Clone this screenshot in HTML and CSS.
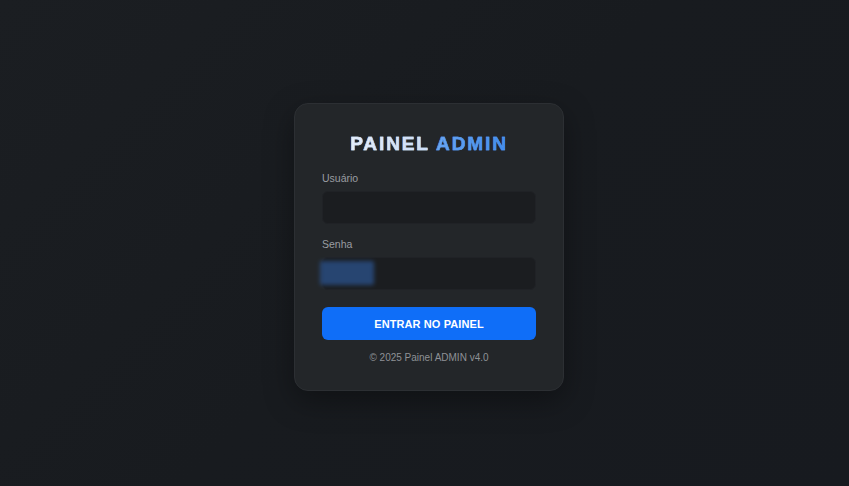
FILE: index.html
```html
<!DOCTYPE html>
<html lang="pt-BR">
<head>
<meta charset="utf-8">
<title>Painel ADMIN</title>
<link rel="stylesheet" href="styles.css">
</head>
<body>
<main class="page">
  <form class="card">
    <h1 class="title"><span class="t1">PAINEL</span> <span class="t2">ADMIN</span></h1>
    <label class="label" for="u">Usuário</label>
    <div class="field"><input id="u" class="input" type="text"></div>
    <label class="label" for="p">Senha</label>
    <div class="field"><input id="p" class="input" type="password"><span class="autofill"></span></div>
    <button class="btn" type="button">ENTRAR NO PAINEL</button>
    <p class="foot">© 2025 Painel ADMIN v4.0</p>
  </form>
</main>
</body>
</html>
```

FILE: styles.css
```css
* { box-sizing: border-box; }
html, body { margin: 0; height: 100%; }
body {
  background: linear-gradient(135deg, #1b1e22 0%, #181b1f 50%, #171a1f 100%);
  font-family: "Liberation Sans", Arial, sans-serif;
}
.page {
  height: 486px;
  display: flex;
  justify-content: center;
  padding-top: 103px;
  padding-left: 9px;
}
.card {
  width: 270px;
  height: 288px;
  background: #232629;
  border: 1px solid #2c2f33;
  border-radius: 14px;
  box-shadow: 0 10px 30px rgba(0,0,0,0.35);
  padding: 28px 27px 0 27px;
  display: flex;
  flex-direction: column;
}
.title {
  margin: 0 0 16px 0;
  text-align: center;
  font-size: 19px;
  line-height: 24px;
  font-weight: 900;
  letter-spacing: 1.9px;
}
.t1 {
  background: linear-gradient(90deg, #e6eefc, #c9dbf7);
  -webkit-background-clip: text;
  background-clip: text;
  color: transparent;
  -webkit-text-stroke: 0.5px #d6e3f8;
}
.t2 {
  background: linear-gradient(90deg, #6aa6f2, #3f8bef);
  -webkit-background-clip: text;
  background-clip: text;
  color: transparent;
  -webkit-text-stroke: 0.5px #559af0;
}
.label {
  font-size: 10.5px;
  color: #9a9da2;
  line-height: 13px;
  margin-bottom: 6px;
}
.field {
  position: relative;
  margin-bottom: 14px;
}
.input {
  display: block;
  width: 100%;
  height: 33px;
  background: #1b1d20;
  border: 1px solid #202226;
  border-radius: 6px;
  outline: none;
  color: #ddd;
  padding: 0 10px;
}
.autofill {
  position: absolute;
  left: -2px;
  top: 4px;
  width: 54px;
  height: 24px;
  background: #2a4f86;
  filter: blur(2px);
  opacity: 0.8;
  border-radius: 2px;
}
.btn {
  margin-top: 3px;
  height: 33px;
  width: 100%;
  border: none;
  border-radius: 6px;
  background: #0f6ef8;
  color: #fff;
  font-family: "Liberation Sans", Arial, sans-serif;
  font-weight: 700;
  font-size: 11px;
  letter-spacing: 0.1px;
}
.foot {
  margin: 12px 0 0 0;
  text-align: center;
  font-size: 10px;
  color: #8e9196;
}
```
